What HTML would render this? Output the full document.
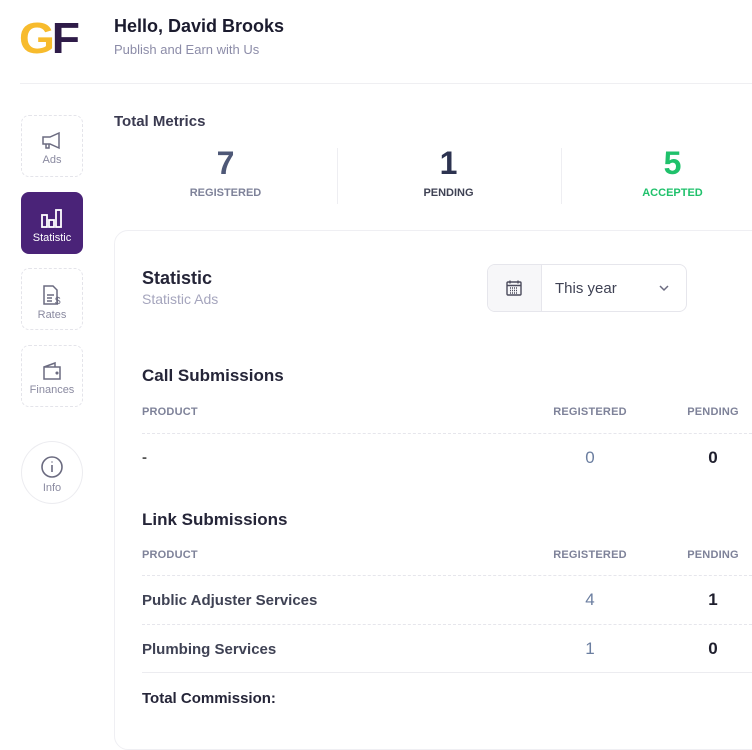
<!DOCTYPE html>
<html><head><style>
*{margin:0;padding:0;box-sizing:border-box}
body{width:752px;height:720px;overflow:hidden;background:#fff;font-family:"Liberation Sans",sans-serif;position:relative;color:#1e1e2d}
.a{position:absolute;white-space:nowrap}
.nav{position:absolute;left:21px;width:62px;height:62px;border:1.5px dashed #e4e4ea;border-radius:8px;text-align:center;font-size:11px;color:#8a8aa0}
.nav svg{display:block;margin:15px auto 3px}
.lbl{font-size:11px;font-weight:bold;color:#7e8299;letter-spacing:.2px}
.num{font-size:32px;font-weight:bold;width:223px;text-align:center}
.mlab{font-size:11px;font-weight:bold;width:223px;text-align:center}
.h{font-size:17px;font-weight:bold;color:#252538}
.hr{position:absolute;left:142px;width:620px;border-top:1px dashed #e6e6ec}
.c{text-align:center;width:80px;margin-left:-40px}
.row{font-size:15px;font-weight:bold;color:#3f4254}
</style></head><body>
<div class="a" style="left:19px;top:15px;font-size:44px;font-weight:bold;letter-spacing:-3px;line-height:48px;transform:scaleX(1.05);transform-origin:left"><span style="color:#f7bb2d">G</span><span style="color:#2e1b48">F</span></div>
<div class="a" style="left:114px;top:16px;font-size:18px;font-weight:bold;color:#1b1b2e">Hello, David Brooks</div>
<div class="a" style="left:114px;top:42px;font-size:13px;color:#8c8ca8">Publish and Earn with Us</div>
<div class="a" style="left:20px;top:83px;width:732px;border-top:1px solid #efeff2"></div>

<div class="nav" style="top:115px"><svg width="24" height="20" viewBox="0 0 24 20" fill="none" stroke="#6b6b80" stroke-width="1.5"><path d="M3 6h7l9-4v15l-9-4H3z M6 13v4h3v-4"/></svg>Ads</div>
<div class="nav" style="top:192px;background:#4a2378;border:none;color:#fff"><svg width="24" height="22" viewBox="0 0 24 22" fill="none" stroke="#fff" stroke-width="1.8"><rect x="2" y="8" width="5" height="12"/><rect x="9" y="13" width="5" height="7"/><rect x="16" y="3" width="5" height="17"/></svg>Statistic</div>
<div class="nav" style="top:268px"><svg width="24" height="22" viewBox="0 0 24 22" fill="none" stroke="#6b6b80" stroke-width="1.5"><path d="M4 2h9l4 4v14H4z M7 11h7 M7 14h5 M7 17h5"/><text x="15" y="20" font-size="10" fill="#6b6b80" stroke="none" font-family="Liberation Sans">$</text></svg>Rates</div>
<div class="nav" style="top:345px"><svg width="24" height="20" viewBox="0 0 24 20" fill="none" stroke="#6b6b80" stroke-width="1.5"><path d="M4 6h16v12H4z M4 6l11-4v4"/><circle cx="17" cy="12" r=".8" fill="#6b6b80"/></svg>Finances</div>
<div class="nav" style="top:441px;height:63px;border-radius:50%;border:1.5px solid #ececf0"><svg width="24" height="24" viewBox="0 0 24 24" fill="none" stroke="#6b6b80" stroke-width="1.6" style="margin-top:13px"><circle cx="12" cy="12" r="10"/><path d="M12 10v7 M12 6.5v1"/></svg>Info</div>

<div class="a" style="left:114px;top:113px;font-size:15px;font-weight:bold;color:#3a3a50">Total Metrics</div>
<div class="a num" style="left:114px;top:145px;color:#4e5877">7</div>
<div class="a num" style="left:337px;top:145px;color:#2d3350">1</div>
<div class="a num" style="left:561px;top:145px;color:#1fc16b">5</div>
<div class="a mlab" style="left:114px;top:187px;color:#7e8299">REGISTERED</div>
<div class="a mlab" style="left:337px;top:187px;color:#3f4254">PENDING</div>
<div class="a mlab" style="left:561px;top:187px;color:#1fc16b">ACCEPTED</div>
<div class="a" style="left:337px;top:148px;height:56px;border-left:1px solid #eeeef2"></div>
<div class="a" style="left:561px;top:148px;height:56px;border-left:1px solid #eeeef2"></div>

<div class="a" style="left:114px;top:230px;width:680px;height:520px;border:1px solid #efeff3;border-radius:14px"></div>
<div class="a" style="left:142px;top:268px;font-size:18px;font-weight:bold;color:#252538">Statistic</div>
<div class="a" style="left:142px;top:291px;font-size:14px;color:#a5a5bd">Statistic Ads</div>
<div class="a" style="left:487px;top:264px;width:200px;height:48px;border:1px solid #e6e6ec;border-radius:8px;overflow:hidden">
<div style="position:absolute;left:0;top:0;width:54px;height:48px;background:#f7f7f9;border-right:1px solid #e6e6ec"><svg style="position:absolute;left:17px;top:14px" width="18" height="18" viewBox="0 0 18 18" fill="none" stroke="#4b4b5c" stroke-width="1.4"><rect x="2" y="3" width="14" height="13" rx="1"/><path d="M2 6.5h14 M5 1.5v3 M13 1.5v3"/><path d="M5 9h8 M5 11.5h8 M5 14h8" stroke-dasharray="1 1"/></svg></div>
<div style="position:absolute;left:67px;top:15px;font-size:15px;color:#3f4254">This year</div>
<svg style="position:absolute;left:170px;top:19px" width="12" height="8" viewBox="0 0 12 8" fill="none" stroke="#6b6b80" stroke-width="1.5"><path d="M2 2l4 4 4-4"/></svg>
</div>

<div class="a h" style="left:142px;top:366px">Call Submissions</div>
<div class="a lbl" style="left:142px;top:406px">PRODUCT</div>
<div class="a lbl c" style="left:590px;top:406px">REGISTERED</div>
<div class="a lbl c" style="left:713px;top:406px">PENDING</div>
<div class="hr" style="top:433px"></div>
<div class="a row" style="left:142px;top:449px;color:#555">-</div>
<div class="a row c" style="left:590px;top:448px;font-size:17px;color:#6b7ea0;font-weight:normal">0</div>
<div class="a row c" style="left:713px;top:448px;font-size:17px;color:#1e1e2d">0</div>

<div class="a h" style="left:142px;top:510px">Link Submissions</div>
<div class="a lbl" style="left:142px;top:549px">PRODUCT</div>
<div class="a lbl c" style="left:590px;top:549px">REGISTERED</div>
<div class="a lbl c" style="left:713px;top:549px">PENDING</div>
<div class="hr" style="top:575px"></div>
<div class="a row" style="left:142px;top:592px">Public Adjuster Services</div>
<div class="a row c" style="left:590px;top:590px;font-size:17px;color:#6b7ea0;font-weight:normal">4</div>
<div class="a row c" style="left:713px;top:590px;font-size:17px;color:#1e1e2d">1</div>
<div class="hr" style="top:624px"></div>
<div class="a row" style="left:142px;top:641px">Plumbing Services</div>
<div class="a row c" style="left:590px;top:639px;font-size:17px;color:#6b7ea0;font-weight:normal">1</div>
<div class="a row c" style="left:713px;top:639px;font-size:17px;color:#1e1e2d">0</div>
<div class="a" style="left:142px;top:672px;width:620px;border-top:1px solid #ececf0"></div>
<div class="a row" style="left:142px;top:690px;color:#252538">Total Commission:</div>
</body></html>
